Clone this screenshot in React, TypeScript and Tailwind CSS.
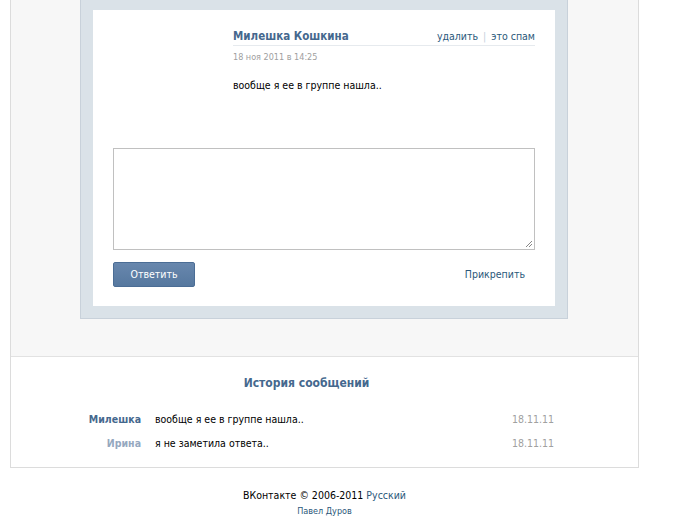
import React from "react";

export default function App() {
  const font = { fontFamily: '"DejaVu Sans Condensed", "DejaVu Sans", Tahoma, sans-serif' };
  return (
    <div className="w-[677px] h-[528px] bg-white overflow-hidden text-[11px] text-black" style={font}>
      <div className="ml-[10px] w-[629px] border-l border-r border-b border-[#dcdcdc]">
        <div className="bg-[#f7f7f7] pl-[69px] pb-[37px] border-b border-[#e2e2e2]">
          <div className="w-[488px] bg-[#dae2e8] border-l border-r border-b border-[#c8d1da] pt-[10px] px-[12px] pb-[12px]">
            <div className="bg-white pt-[19px] pb-[19px] px-[20px]">
              <div className="ml-[120px]">
                <div className="flex items-center justify-between h-[17px] border-b border-[#e6eaee]">
                  <span className="font-bold text-[11.5px] text-[#45688e]">Милешка Кошкина</span>
                  <span className="text-[#2b587a] text-[10.5px]">
                    удалить <span className="text-[#c5d0db] mx-[2px]">|</span> это спам
                  </span>
                </div>
                <div className="text-[9px] text-[#a0a0a0] mt-[5px] leading-[12px]">18 ноя 2011 в 14:25</div>
                <div className="mt-[15px] text-[10.5px] leading-[14px]">вообще я ее в группе нашла..</div>
              </div>
              <div className="mt-[56px] h-[102px] border border-[#c0c0c0] relative">
                <svg className="absolute right-[1px] bottom-[1px]" width="9" height="9" viewBox="0 0 9 9">
                  <line x1="8" y1="2" x2="2" y2="8" stroke="#888" strokeWidth="1" />
                  <line x1="8" y1="5" x2="5" y2="8" stroke="#888" strokeWidth="1" />
                </svg>
              </div>
              <div className="mt-[12px] flex items-center justify-between">
                <div className="w-[82px] h-[25px] rounded-[2px] border border-[#4b6d95] bg-gradient-to-b from-[#6887ad] to-[#56789f] text-white text-[10.5px] flex items-center justify-center">
                  Ответить
                </div>
                <span className="text-[#2b587a] text-[10.5px] mr-[10px] mt-[1px]">Прикрепить</span>
              </div>
            </div>
          </div>
        </div>
        <div className="bg-white pt-[17px] pb-[16px]">
          <div className="text-center font-bold text-[12px] text-[#45688e] pr-[36px]">История сообщений</div>
          <div className="mt-[21px] flex flex-col gap-[10px] text-[10.5px]">
            <div className="flex items-center h-[14px]">
              <span className="w-[130px] text-right font-bold text-[#45688e]">Милешка</span>
              <span className="ml-[14px] w-[357px]">вообще я ее в группе нашла..</span>
              <span className="text-[#a0a0a0]">18.11.11</span>
            </div>
            <div className="flex items-center h-[14px]">
              <span className="w-[130px] text-right font-bold text-[#95a8bf]">Ирина</span>
              <span className="ml-[14px] w-[357px]">я не заметила ответа..</span>
              <span className="text-[#a0a0a0]">18.11.11</span>
            </div>
          </div>
        </div>
      </div>
      <div className="ml-[10px] w-[629px]">
        <div className="mt-[20px] text-center text-[10.5px] leading-[14px]">
          ВКонтакте © 2006-2011 <span className="text-[#2b587a]">Русский</span>
        </div>
        <div className="text-center text-[9px] text-[#2b587a] mt-[3px]">Павел Дуров</div>
      </div>
    </div>
  );
}
